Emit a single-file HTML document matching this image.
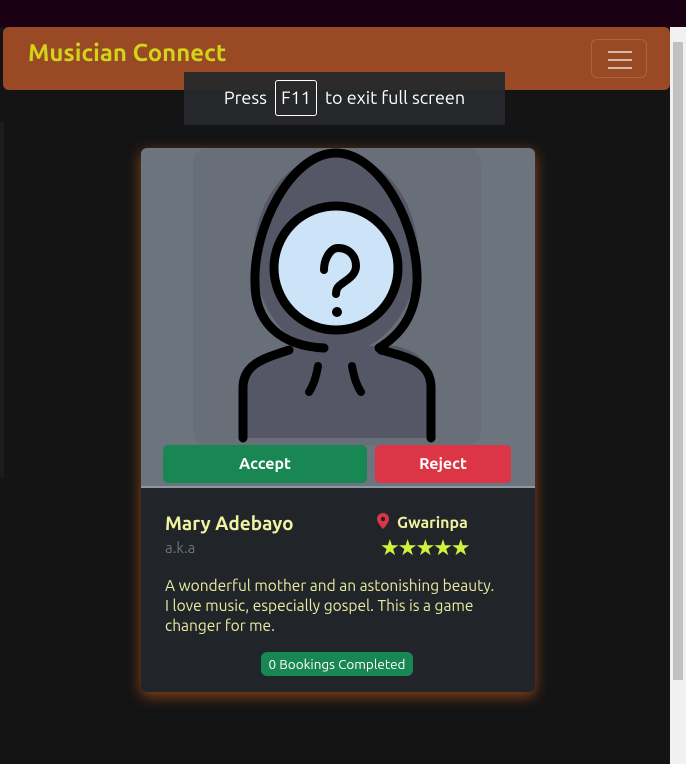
<!DOCTYPE html>
<html><head><meta charset="utf-8"><style>
*{box-sizing:border-box;margin:0;padding:0}
body{width:686px;height:764px;background:#141414;font-family:"Ubuntu","Liberation Sans",sans-serif;position:relative;overflow:hidden}
.top{position:absolute;left:0;top:0;width:686px;height:27px;background:#1a0012}
.side{position:absolute;left:0;top:122px;width:4px;height:355px;background:#1c1c1c}
.sb{position:absolute;left:670px;top:27px;width:16px;height:737px;background:#f1f1f1}
.thumb{position:absolute;left:673px;top:42px;width:10px;height:638px;background:#c1c1c1}
.nav{position:absolute;left:3px;top:27px;width:667px;height:63px;background:#994a24;border-radius:6px}
.brand{position:absolute;left:25px;top:12px;font-size:24px;font-weight:bold;color:#d2d41a}
.tog{position:absolute;left:588px;top:12px;width:56px;height:39px;border:1px solid rgba(255,255,255,.15);border-radius:6px}
.tog i{position:absolute;left:16px;width:24px;height:2px;background:#d8b8a8}
.ov{position:absolute;left:184px;top:72px;width:321px;height:53px;background:rgba(38,40,44,.95);color:#fff;font-size:18px;line-height:53px;text-align:center}
.ov span{border:1px solid #fff;border-radius:3px;padding:7px 5px;margin:0 4px}
.card{position:absolute;left:141px;top:148px;width:394px;height:544px;border-radius:6px;box-shadow:0 4px 14px rgba(170,80,30,.8);overflow:hidden;background:#212529}
.img{position:absolute;left:0;top:0;width:394px;height:340px;background:#6c757d;border-bottom:2px solid #8a9aa5}
.inner{position:absolute;left:52px;top:0;width:288px;height:297px;background:#686f79;border-radius:14px}
.btn{position:absolute;top:297px;height:38px;border-radius:5px;color:#fff;font-weight:bold;font-size:16px;text-align:center;line-height:38px}
.name{position:absolute;left:24px;top:364px;font-size:19px;font-weight:bold;color:#f2f2a0}
.aka{position:absolute;left:24px;top:391px;font-size:15px;color:#6c757d}
.loc{position:absolute;left:236px;top:365px;font-size:16px;font-weight:bold;color:#f2f2a0}
.stars{position:absolute;left:239px;top:387px;color:#d4ef3e;font-size:22px;letter-spacing:-2px}
.desc{position:absolute;left:24px;top:428px;width:330px;font-size:15.5px;line-height:20px;color:#eaeaa0}
.badge{position:absolute;left:120px;top:504px;width:152px;height:24px;background:#198754;border-radius:6px;color:#fff;font-size:13.5px;line-height:24px;text-align:center}
</style></head><body>
<div class="top"></div>
<div class="side"></div>
<div class="sb"></div><div class="thumb"></div>
<div class="nav"><div class="brand">Musician Connect</div><div class="tog"><i style="top:11px"></i><i style="top:19px"></i><i style="top:27px"></i></div></div>
<div class="card">
 <div class="img">
  <div class="inner"></div>
  <svg width="394" height="297" style="position:absolute;left:0;top:0">
   <path d="M102,290 L102,240 C102,215 125,205 150,198 L255,198 C280,205 290,215 290,240 L290,290 Z" fill="#555766"/>
   <ellipse cx="195" cy="106" rx="82" ry="100" fill="#555766"/>
   <path d="M102,290 L102,240 C102,215 125,210 148,202" fill="none" stroke="#000" stroke-width="9" stroke-linecap="round"/>
   <path d="M290,290 L290,240 C290,215 270,210 240,202" fill="none" stroke="#000" stroke-width="9" stroke-linecap="round"/>
   <path d="M177,218 C175,230 172,238 168,244 M211,218 C213,230 216,238 220,244" fill="none" stroke="#000" stroke-width="8" stroke-linecap="round"/>
   <path d="M183,200 C140,198 114,175 114,135 C112,80 150,5 195,5 C240,5 278,80 276,135 C274,165 262,185 238,200" fill="none" stroke="#000" stroke-width="9" stroke-linecap="round"/>
   <circle cx="195" cy="120" r="62" fill="#cce3f8" stroke="#000" stroke-width="9"/>
   <path d="M183,122 C183,110 190,100 197,100 C208,100 215,108 215,118 C215,128 205,132 198,138 C195,141 195,144 195,146" fill="none" stroke="#000" stroke-width="8" stroke-linecap="round"/>
   <circle cx="196" cy="164" r="5" fill="#000"/>
  </svg>
  <div class="btn" style="left:22px;width:204px;background:#198754">Accept</div>
  <div class="btn" style="left:234px;width:136px;background:#dc3545">Reject</div>
 </div>
 <div class="name">Mary Adebayo</div>
 <div class="aka">a.k.a</div>
 <div class="loc"><svg width="12" height="16" viewBox="0 0 12 16" style="vertical-align:-1px;margin-right:8px"><path d="M6,0C2.7,0 0,2.6 0,6C0,10 6,16 6,16C6,16 12,10 12,6C12,2.6 9.3,0 6,0Z" fill="#dc3545"/><circle cx="6" cy="6" r="2.2" fill="#212529"/></svg>Gwarinpa</div>
 <div class="stars">★★★★★</div>
 <div class="desc">A wonderful mother and an astonishing beauty. I love music, especially gospel. This is a game changer for me.</div>
 <div class="badge">0 Bookings Completed</div>
</div>
<div class="ov">Press <span>F11</span> to exit full screen</div>
</body></html>
